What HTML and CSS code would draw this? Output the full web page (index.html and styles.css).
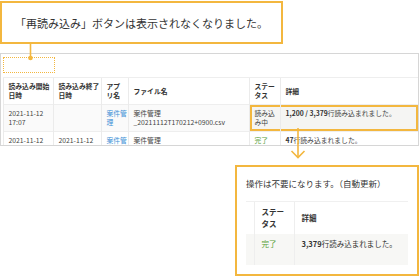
FILE: index.html
```html
<!DOCTYPE html>
<html lang="ja">
<head>
    <meta charset="UTF-8">
    <meta name="viewport" content="width=device-width, initial-scale=1.0">
    <title>取り込み履歴 - 再読み込みボタン</title>
    <link rel="stylesheet" href="styles.css">
</head>
<body>
    <div class="note">「再読み込み」ボタンは表示されなくなりました。</div>

    <div class="panel">
        <div class="toolbar">
            <div class="marker"></div>
        </div>
        <table class="history">
            <colgroup>
                <col style="width: 50px">
                <col style="width: 48px">
                <col style="width: 27px">
                <col style="width: 121px">
                <col style="width: 31px">
                <col style="width: 137px">
            </colgroup>
            <thead>
                <tr>
                    <th>読み込み開始日時</th>
                    <th>読み込み終了日時</th>
                    <th>アプ<br>リ名</th>
                    <th>ファイル名</th>
                    <th>ステータス</th>
                    <th>詳細</th>
                </tr>
            </thead>
            <tbody>
                <tr class="running">
                    <td>2021-11-12 17:07</td>
                    <td></td>
                    <td><a href="#" class="app-link">案件管理</a></td>
                    <td>案件管理<br>_20211112T170212+0900.csv</td>
                    <td class="hl-start">読み込み中</td>
                    <td class="hl-end"><b>1,200 / 3,379</b>行読み込まれました。</td>
                </tr>
                <tr>
                    <td>2021-11-12 17:02</td>
                    <td>2021-11-12 17:02</td>
                    <td><a href="#" class="app-link">案件管理</a></td>
                    <td>案件管理<br>_20211112T170212+0900.csv</td>
                    <td class="done">完了</td>
                    <td><b>47</b>行読み込まれました。</td>
                </tr>
            </tbody>
        </table>
    </div>

    <div class="result">
        <p class="result-text">操作は不要になります。（自動更新）</p>
        <table class="mini">
            <colgroup>
                <col style="width: 8px">
                <col style="width: 40px">
                <col style="width: 114px">
            </colgroup>
            <thead>
                <tr>
                    <th></th>
                    <th>ステータス</th>
                    <th>詳細</th>
                </tr>
            </thead>
            <tbody>
                <tr>
                    <td></td>
                    <td class="done">完了</td>
                    <td><b>3,379</b>行読み込まれました。</td>
                </tr>
            </tbody>
        </table>
    </div>

    <!-- callout connectors -->
    <svg class="pin" width="7" height="18" viewBox="0 0 7 18">
        <line x1="3.5" y1="0" x2="3.5" y2="14" stroke="#f3b73f" stroke-width="1.6"/>
        <circle cx="3.5" cy="14" r="2.3" fill="#f3b73f"/>
    </svg>
    <svg class="down-arrow" width="16" height="32" viewBox="0 0 16 32">
        <line x1="8" y1="0" x2="8" y2="29" stroke="#f3b73f" stroke-width="1.6"/>
        <polyline points="1.5,23 8,29.5 14.5,23" fill="none" stroke="#f3b73f" stroke-width="1.6"/>
    </svg>
</body>
</html>
```

FILE: styles.css
```css
body {
    margin: 0;
    width: 419px;
    height: 277px;
    position: relative;
    overflow: hidden;
    background-color: #fff;
    color: #333;
    font-family: "Noto Sans CJK JP", "Noto Sans", sans-serif;
}
.note {
    box-sizing: border-box;
    width: 283px;
    height: 43px;
    margin-top: 1px;
    padding-left: 13px;
    border: 2px solid #f3b73f;
    display: flex;
    align-items: center;
    font-size: 11px;
    color: #333;
}
.panel {
    box-sizing: border-box;
    width: 419px;
    height: 93px;
    margin-top: 9px;
    border: 1px solid #d6d6d6;
    overflow: hidden;
}
.toolbar {
    box-sizing: border-box;
    height: 23px;
    padding: 3px 0 0 2px;
}
.marker {
    width: 52px;
    height: 16px;
    box-sizing: border-box;
    border: 1.5px dotted #f3b73f;
}
.history {
    margin-left: 2px;
    width: 414px;
    border-collapse: collapse;
    table-layout: fixed;
    font-size: 6.8px;
    line-height: 9px;
    color: #444;
}
.history th, .history td {
    padding: 4px 1px 4px 4.5px;
    border-left: 1px solid #ebebeb;
    border-top: 1px solid #eeeeee;
    text-align: left;
}
.history th {
    font-weight: 700;
    color: #333;
    vertical-align: middle;
    height: 18px;
}
.history td {
    vertical-align: top;
    height: 18px;
}
.history .running td {
    background-color: #fafafa;
}
.history .running td.hl-start,
.history .running td.hl-end {
    background-color: #f5f5f3;
}
.hl-start {
    box-shadow: inset 2px 2px 0 #f3b73f, inset 0 -2px 0 #f3b73f;
}
.hl-end {
    box-shadow: inset -2px 2px 0 #f3b73f, inset 0 -2px 0 #f3b73f;
}
.app-link {
    color: #3d8fd6;
    text-decoration: none;
}
.done {
    color: #5aa23a;
}
b {
    font-weight: 700;
    color: #333;
}
.result {
    box-sizing: border-box;
    width: 184px;
    height: 111px;
    margin: 19px 0 0 235px;
    padding: 11px 8px 0 9px;
    border: 2px solid #f3b73f;
}
.result-text {
    margin: 0;
    font-size: 8.5px;
    line-height: 10px;
    color: #333;
}
.mini {
    margin-top: 13px;
    width: 162px;
    border-collapse: collapse;
    table-layout: fixed;
    font-size: 7.5px;
    line-height: 12px;
}
.mini th, .mini td {
    padding: 4px 4px 4px 7px;
    border-left: 1px solid #eeeeee;
    text-align: left;
}
.mini th:first-child, .mini td:first-child {
    border-left: none;
}
.mini th {
    font-weight: 700;
    height: 24px;
    vertical-align: middle;
    border-top: 1px solid #f0f0f0;
}
.mini td {
    height: 23px;
    vertical-align: top;
    background-color: #f7f7f5;
}
.pin {
    position: absolute;
    left: 27px;
    top: 44px;
}
.down-arrow {
    position: absolute;
    left: 290px;
    top: 128px;
}
```
